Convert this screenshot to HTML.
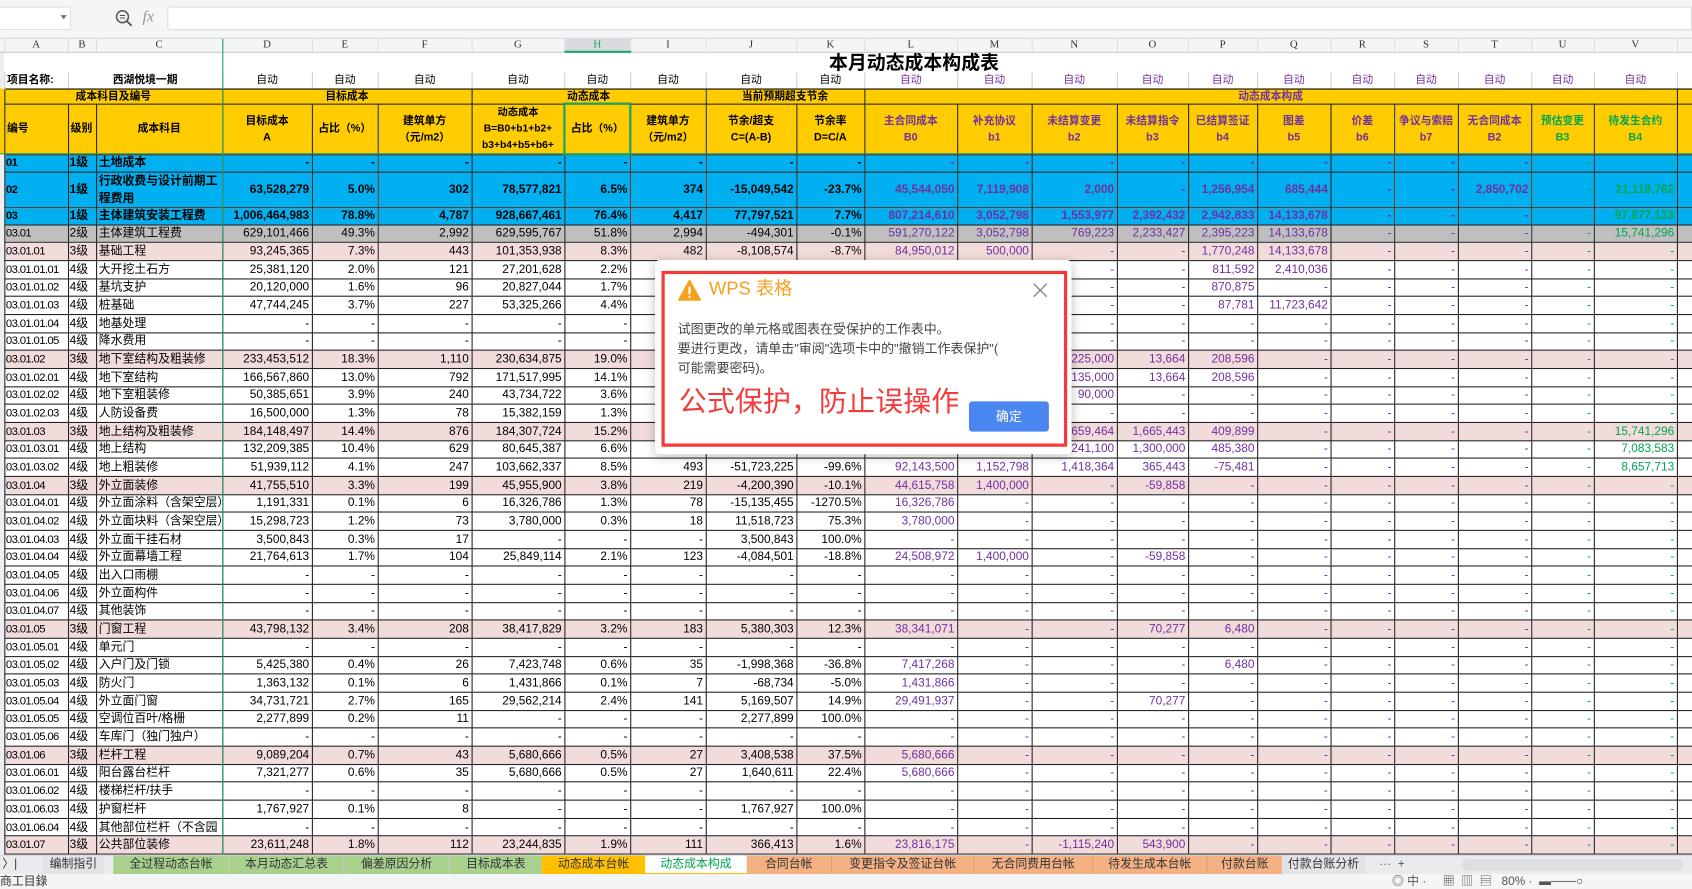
<!DOCTYPE html>
<html><head><meta charset="utf-8">
<style>
*{margin:0;padding:0;box-sizing:border-box}
html,body{width:1692px;height:889px;overflow:hidden;background:#fff}
#w{position:absolute;left:0;top:0;width:1568px;height:824px;transform:scale(1.07908);transform-origin:0 0;font-family:"Liberation Sans Narrow","Liberation Sans","Noto Sans CJK SC",sans-serif;font-size:11px;color:#000}
#tb{position:absolute;left:0;top:0;width:1568px;height:36px;background:#f4f5f7;border-bottom:1px solid #d5d7db}
#nb{position:absolute;left:0;top:6px;width:66px;height:22px;background:#fff;border:1px solid #d9dbe0;border-left:none;border-radius:0 3px 3px 0}
#fb{position:absolute;left:155px;top:6px;width:1413px;height:22px;background:#fff;border:1px solid #d9dbe0;border-radius:3px 0 0 3px}
table{position:absolute;left:0;top:36px;border-collapse:collapse;table-layout:fixed;width:1568px}
td{border:1px solid #222;text-align:right;padding:0 2px;white-space:nowrap;overflow:hidden;line-height:14px}
td:nth-child(2),td:nth-child(3),td:nth-child(4){text-align:left}
tr.d td:nth-child(2){letter-spacing:-0.6px;font-size:10.5px;padding:0 1px}
tr.d td:nth-child(3){padding:0 1px}
td:nth-child(1){border:none;background:#eceef1;padding:0}
tr.d td:nth-child(n+13):nth-child(-n+21){color:#7030a0}
tr.d td:nth-child(22),tr.d td:nth-child(23){color:#00a650}
tr.d td:nth-child(24){border-right:none}
tr.d{height:16.686px}
tr.c1 td{background:#00b0f0;font-weight:bold}
tr.c2 td{background:#bfbfbf}
tr.c3 td{background:#f2dcdb}
tr.c1 td:nth-child(1),tr.c2 td:nth-child(1),tr.c3 td:nth-child(1){background:#eceef1}
tr.ch td{background:#f4f5f7;border:none;border-right:1px solid #dcdde0;border-bottom:1px solid #c8cad0;text-align:center;font-family:"Liberation Serif",serif;font-size:10px;color:#333;line-height:11px}
tr.ch td.sel{background:#d8dbe0;border-bottom:2px solid #21a366;color:#21a366}
tr.tt td{border:none}
tr.r2 td{border:none;border-right:1px solid #d0d0d0;border-bottom:1px solid #000;text-align:center;font-size:10px;line-height:13px}
tr.h3 td,tr.h4 td{background:#ffcc00;font-weight:bold;text-align:center;font-size:10px;line-height:13px}
tr.h4 td{white-space:normal;line-height:15px}
.p{color:#7030a0}.g{color:#00a650}
.wrap{white-space:normal!important;line-height:16px!important}
#gv{position:absolute;left:206px;top:36px;width:1px;height:756px;background:#21a366}
#gh{position:absolute;left:0;top:142px;width:1568px;height:1px;background:#21a366}
#selc{position:absolute;left:522px;top:95px;width:63px;height:49px;border:2px solid #21a366}
#tabs{position:absolute;left:0;top:792px;width:1568px;height:18px;background:#e9ebee;border-top:1px solid #d0d2d6;font-family:"Liberation Sans","Noto Sans CJK SC",sans-serif;font-size:11px}
.tab{position:absolute;top:0;height:18px;line-height:17px;text-align:center;color:#333}
#st{position:absolute;left:0;top:810px;width:1568px;height:14px;background:#f4f5f7;font-family:"Liberation Sans","Noto Sans CJK SC",sans-serif;font-size:11px;color:#333}
#dlg{position:absolute;left:607px;top:241px;width:386px;height:180px;background:#fff;border-radius:4px;box-shadow:0 2px 10px rgba(0,0,0,.25);font-family:"Liberation Sans","Noto Sans CJK SC",sans-serif}
#red{position:absolute;left:6px;top:10px;width:376px;height:163px;border:3px solid #f53a3a}
</style></head><body><div id="w">
<div id="tb"><div id="nb"><span style="position:absolute;left:56px;top:7px;width:0;height:0;border-left:3px solid transparent;border-right:3px solid transparent;border-top:4px solid #777"></span></div>
<svg style="position:absolute;left:106px;top:8px" width="18" height="18" viewBox="0 0 18 18"><circle cx="7.5" cy="7.5" r="5.5" fill="none" stroke="#555" stroke-width="1.4"/><line x1="11.5" y1="11.5" x2="16" y2="16" stroke="#555" stroke-width="1.6"/><line x1="5" y1="6.3" x2="10" y2="6.3" stroke="#555"/><line x1="5" y1="8.7" x2="10" y2="8.7" stroke="#555"/></svg>
<span style="position:absolute;left:132px;top:8px;font-family:'Liberation Serif',serif;font-style:italic;font-size:15px;color:#999">fx</span>
<div id="fb"></div></div>
<table>
<colgroup><col style="width:4px"><col style="width:59px"><col style="width:26px"><col style="width:117px"><col style="width:83px"><col style="width:61px"><col style="width:87px"><col style="width:86px"><col style="width:61px"><col style="width:70px"><col style="width:84px"><col style="width:63px"><col style="width:86px"><col style="width:69px"><col style="width:79px"><col style="width:66px"><col style="width:64px"><col style="width:68px"><col style="width:59px"><col style="width:59px"><col style="width:68px"><col style="width:58px"><col style="width:77px"><col style="width:14px"></colgroup>
<tr class="ch" style="height:12px"><td></td><td>A</td><td>B</td><td>C</td><td>D</td><td>E</td><td>F</td><td>G</td><td class="sel">H</td><td>I</td><td>J</td><td>K</td><td>L</td><td>M</td><td>N</td><td>O</td><td>P</td><td>Q</td><td>R</td><td>S</td><td>T</td><td>U</td><td>V</td><td></td></tr>
<tr class="tt" style="height:19px"><td></td><td colspan="23"></td></tr>
<tr class="r2" style="height:15px"><td style="border-bottom:none"></td><td style="text-align:left;font-weight:bold">项目名称:</td><td colspan="2" style="font-weight:bold">西湖悦境一期</td><td>自动</td><td>自动</td><td>自动</td><td>自动</td><td>自动</td><td>自动</td><td>自动</td><td>自动</td><td class="p">自动</td><td class="p">自动</td><td class="p">自动</td><td class="p">自动</td><td class="p">自动</td><td class="p">自动</td><td class="p">自动</td><td class="p">自动</td><td class="p">自动</td><td class="p">自动</td><td class="p">自动</td><td></td></tr>
<tr class="h3" style="height:14px"><td></td><td colspan="3">成本科目及编号</td><td colspan="3">目标成本</td><td colspan="3">动态成本</td><td colspan="2">当前预期超支节余</td><td colspan="11" class="p">动态成本构成</td><td></td></tr>
<tr class="h4" style="height:47px"><td></td><td style="text-align:left">编号</td><td style="text-align:left">级别</td><td style="text-align:center">成本科目</td><td>目标成本<br>A</td><td>占比（%）</td><td>建筑单方<br>（元/m2）</td><td style="font-size:9.5px;line-height:15px">动态成本<br>B=B0+b1+b2+<br>b3+b4+b5+b6+</td><td>占比（%）</td><td>建筑单方<br>（元/m2）</td><td>节余/超支<br>C=(A-B)</td><td>节余率<br>D=C/A</td><td class="p">主合同成本<br>B0</td><td class="p">补充协议<br>b1</td><td class="p">未结算变更<br>b2</td><td class="p">未结算指令<br>b3</td><td class="p">已结算签证<br>b4</td><td class="p">图差<br>b5</td><td class="p">价差<br>b6</td><td class="p">争议与索赔<br>b7</td><td class="p">无合同成本<br>B2</td><td class="g">预估变更<br>B3</td><td class="g">待发生合约<br>B4</td><td></td></tr>
<tr class="d c1" style="height:16px"><td></td><td>01</td><td>1级</td><td>土地成本</td><td>-</td><td>-</td><td>-</td><td>-</td><td>-</td><td>-</td><td>-</td><td>-</td><td>-</td><td>-</td><td>-</td><td>-</td><td>-</td><td>-</td><td>-</td><td>-</td><td>-</td><td>-</td><td>-</td><td></td></tr>
<tr class="d c1" style="height:33px"><td></td><td>02</td><td>1级</td><td class="wrap">行政收费与设计前期工程费用</td><td>63,528,279</td><td>5.0%</td><td>302</td><td>78,577,821</td><td>6.5%</td><td>374</td><td>-15,049,542</td><td>-23.7%</td><td>45,544,050</td><td>7,119,908</td><td>2,000</td><td>-</td><td>1,256,954</td><td>685,444</td><td>-</td><td>-</td><td>2,850,702</td><td>-</td><td>21,118,762</td><td></td></tr>
<tr class="d c1" style="height:16px"><td></td><td>03</td><td>1级</td><td>主体建筑安装工程费</td><td>1,006,464,983</td><td>78.8%</td><td>4,787</td><td>928,667,461</td><td>76.4%</td><td>4,417</td><td>77,797,521</td><td>7.7%</td><td>807,214,610</td><td>3,052,798</td><td>1,553,977</td><td>2,392,432</td><td>2,942,833</td><td>14,133,678</td><td>-</td><td>-</td><td>-</td><td>-</td><td>97,877,133</td><td></td></tr>
<tr class="d c2"><td></td><td>03.01</td><td>2级</td><td>主体建筑工程费</td><td>629,101,466</td><td>49.3%</td><td>2,992</td><td>629,595,767</td><td>51.8%</td><td>2,994</td><td>-494,301</td><td>-0.1%</td><td>591,270,122</td><td>3,052,798</td><td>769,223</td><td>2,233,427</td><td>2,395,223</td><td>14,133,678</td><td>-</td><td>-</td><td>-</td><td>-</td><td>15,741,296</td><td></td></tr>
<tr class="d c3"><td></td><td>03.01.01</td><td>3级</td><td>基础工程</td><td>93,245,365</td><td>7.3%</td><td>443</td><td>101,353,938</td><td>8.3%</td><td>482</td><td>-8,108,574</td><td>-8.7%</td><td>84,950,012</td><td>500,000</td><td>-</td><td>-</td><td>1,770,248</td><td>14,133,678</td><td>-</td><td>-</td><td>-</td><td>-</td><td>-</td><td></td></tr>
<tr class="d"><td></td><td>03.01.01.01</td><td>4级</td><td>大开挖土石方</td><td>25,381,120</td><td>2.0%</td><td>121</td><td>27,201,628</td><td>2.2%</td><td>129</td><td>-</td><td>-</td><td>-</td><td>-</td><td>-</td><td>-</td><td>811,592</td><td>2,410,036</td><td>-</td><td>-</td><td>-</td><td>-</td><td>-</td><td></td></tr>
<tr class="d"><td></td><td>03.01.01.02</td><td>4级</td><td>基坑支护</td><td>20,120,000</td><td>1.6%</td><td>96</td><td>20,827,044</td><td>1.7%</td><td>99</td><td>-</td><td>-</td><td>-</td><td>-</td><td>-</td><td>-</td><td>870,875</td><td>-</td><td>-</td><td>-</td><td>-</td><td>-</td><td>-</td><td></td></tr>
<tr class="d"><td></td><td>03.01.01.03</td><td>4级</td><td>桩基础</td><td>47,744,245</td><td>3.7%</td><td>227</td><td>53,325,266</td><td>4.4%</td><td>254</td><td>-</td><td>-</td><td>-</td><td>-</td><td>-</td><td>-</td><td>87,781</td><td>11,723,642</td><td>-</td><td>-</td><td>-</td><td>-</td><td>-</td><td></td></tr>
<tr class="d"><td></td><td>03.01.01.04</td><td>4级</td><td>地基处理</td><td>-</td><td>-</td><td>-</td><td>-</td><td>-</td><td>-</td><td>-</td><td>-</td><td>-</td><td>-</td><td>-</td><td>-</td><td>-</td><td>-</td><td>-</td><td>-</td><td>-</td><td>-</td><td>-</td><td></td></tr>
<tr class="d"><td></td><td>03.01.01.05</td><td>4级</td><td>降水费用</td><td>-</td><td>-</td><td>-</td><td>-</td><td>-</td><td>-</td><td>-</td><td>-</td><td>-</td><td>-</td><td>-</td><td>-</td><td>-</td><td>-</td><td>-</td><td>-</td><td>-</td><td>-</td><td>-</td><td></td></tr>
<tr class="d c3"><td></td><td>03.01.02</td><td>3级</td><td>地下室结构及粗装修</td><td>233,453,512</td><td>18.3%</td><td>1,110</td><td>230,634,875</td><td>19.0%</td><td>1,097</td><td>-</td><td>-</td><td>-</td><td>-</td><td>225,000</td><td>13,664</td><td>208,596</td><td>-</td><td>-</td><td>-</td><td>-</td><td>-</td><td>-</td><td></td></tr>
<tr class="d"><td></td><td>03.01.02.01</td><td>4级</td><td>地下室结构</td><td>166,567,860</td><td>13.0%</td><td>792</td><td>171,517,995</td><td>14.1%</td><td>816</td><td>-</td><td>-</td><td>-</td><td>-</td><td>135,000</td><td>13,664</td><td>208,596</td><td>-</td><td>-</td><td>-</td><td>-</td><td>-</td><td>-</td><td></td></tr>
<tr class="d"><td></td><td>03.01.02.02</td><td>4级</td><td>地下室粗装修</td><td>50,385,651</td><td>3.9%</td><td>240</td><td>43,734,722</td><td>3.6%</td><td>208</td><td>-</td><td>-</td><td>-</td><td>-</td><td>90,000</td><td>-</td><td>-</td><td>-</td><td>-</td><td>-</td><td>-</td><td>-</td><td>-</td><td></td></tr>
<tr class="d"><td></td><td>03.01.02.03</td><td>4级</td><td>人防设备费</td><td>16,500,000</td><td>1.3%</td><td>78</td><td>15,382,159</td><td>1.3%</td><td>73</td><td>-</td><td>-</td><td>-</td><td>-</td><td>-</td><td>-</td><td>-</td><td>-</td><td>-</td><td>-</td><td>-</td><td>-</td><td>-</td><td></td></tr>
<tr class="d c3"><td></td><td>03.01.03</td><td>3级</td><td>地上结构及粗装修</td><td>184,148,497</td><td>14.4%</td><td>876</td><td>184,307,724</td><td>15.2%</td><td>877</td><td>-</td><td>-</td><td>-</td><td>-</td><td>1,659,464</td><td>1,665,443</td><td>409,899</td><td>-</td><td>-</td><td>-</td><td>-</td><td>-</td><td>15,741,296</td><td></td></tr>
<tr class="d"><td></td><td>03.01.03.01</td><td>4级</td><td>地上结构</td><td>132,209,385</td><td>10.4%</td><td>629</td><td>80,645,387</td><td>6.6%</td><td>384</td><td>-</td><td>-</td><td>-</td><td>-</td><td>241,100</td><td>1,300,000</td><td>485,380</td><td>-</td><td>-</td><td>-</td><td>-</td><td>-</td><td>7,083,583</td><td></td></tr>
<tr class="d"><td></td><td>03.01.03.02</td><td>4级</td><td>地上粗装修</td><td>51,939,112</td><td>4.1%</td><td>247</td><td>103,662,337</td><td>8.5%</td><td>493</td><td>-51,723,225</td><td>-99.6%</td><td>92,143,500</td><td>1,152,798</td><td>1,418,364</td><td>365,443</td><td>-75,481</td><td>-</td><td>-</td><td>-</td><td>-</td><td>-</td><td>8,657,713</td><td></td></tr>
<tr class="d c3"><td></td><td>03.01.04</td><td>3级</td><td>外立面装修</td><td>41,755,510</td><td>3.3%</td><td>199</td><td>45,955,900</td><td>3.8%</td><td>219</td><td>-4,200,390</td><td>-10.1%</td><td>44,615,758</td><td>1,400,000</td><td>-</td><td>-59,858</td><td>-</td><td>-</td><td>-</td><td>-</td><td>-</td><td>-</td><td>-</td><td></td></tr>
<tr class="d"><td></td><td>03.01.04.01</td><td>4级</td><td>外立面涂料（含架空层）</td><td>1,191,331</td><td>0.1%</td><td>6</td><td>16,326,786</td><td>1.3%</td><td>78</td><td>-15,135,455</td><td>-1270.5%</td><td>16,326,786</td><td>-</td><td>-</td><td>-</td><td>-</td><td>-</td><td>-</td><td>-</td><td>-</td><td>-</td><td>-</td><td></td></tr>
<tr class="d"><td></td><td>03.01.04.02</td><td>4级</td><td>外立面块料（含架空层）</td><td>15,298,723</td><td>1.2%</td><td>73</td><td>3,780,000</td><td>0.3%</td><td>18</td><td>11,518,723</td><td>75.3%</td><td>3,780,000</td><td>-</td><td>-</td><td>-</td><td>-</td><td>-</td><td>-</td><td>-</td><td>-</td><td>-</td><td>-</td><td></td></tr>
<tr class="d"><td></td><td>03.01.04.03</td><td>4级</td><td>外立面干挂石材</td><td>3,500,843</td><td>0.3%</td><td>17</td><td>-</td><td>-</td><td>-</td><td>3,500,843</td><td>100.0%</td><td>-</td><td>-</td><td>-</td><td>-</td><td>-</td><td>-</td><td>-</td><td>-</td><td>-</td><td>-</td><td>-</td><td></td></tr>
<tr class="d"><td></td><td>03.01.04.04</td><td>4级</td><td>外立面幕墙工程</td><td>21,764,613</td><td>1.7%</td><td>104</td><td>25,849,114</td><td>2.1%</td><td>123</td><td>-4,084,501</td><td>-18.8%</td><td>24,508,972</td><td>1,400,000</td><td>-</td><td>-59,858</td><td>-</td><td>-</td><td>-</td><td>-</td><td>-</td><td>-</td><td>-</td><td></td></tr>
<tr class="d"><td></td><td>03.01.04.05</td><td>4级</td><td>出入口雨棚</td><td>-</td><td>-</td><td>-</td><td>-</td><td>-</td><td>-</td><td>-</td><td>-</td><td>-</td><td>-</td><td>-</td><td>-</td><td>-</td><td>-</td><td>-</td><td>-</td><td>-</td><td>-</td><td>-</td><td></td></tr>
<tr class="d"><td></td><td>03.01.04.06</td><td>4级</td><td>外立面构件</td><td>-</td><td>-</td><td>-</td><td>-</td><td>-</td><td>-</td><td>-</td><td>-</td><td>-</td><td>-</td><td>-</td><td>-</td><td>-</td><td>-</td><td>-</td><td>-</td><td>-</td><td>-</td><td>-</td><td></td></tr>
<tr class="d"><td></td><td>03.01.04.07</td><td>4级</td><td>其他装饰</td><td>-</td><td>-</td><td>-</td><td>-</td><td>-</td><td>-</td><td>-</td><td>-</td><td>-</td><td>-</td><td>-</td><td>-</td><td>-</td><td>-</td><td>-</td><td>-</td><td>-</td><td>-</td><td>-</td><td></td></tr>
<tr class="d c3"><td></td><td>03.01.05</td><td>3级</td><td>门窗工程</td><td>43,798,132</td><td>3.4%</td><td>208</td><td>38,417,829</td><td>3.2%</td><td>183</td><td>5,380,303</td><td>12.3%</td><td>38,341,071</td><td>-</td><td>-</td><td>70,277</td><td>6,480</td><td>-</td><td>-</td><td>-</td><td>-</td><td>-</td><td>-</td><td></td></tr>
<tr class="d"><td></td><td>03.01.05.01</td><td>4级</td><td>单元门</td><td>-</td><td>-</td><td>-</td><td>-</td><td>-</td><td>-</td><td>-</td><td>-</td><td>-</td><td>-</td><td>-</td><td>-</td><td>-</td><td>-</td><td>-</td><td>-</td><td>-</td><td>-</td><td>-</td><td></td></tr>
<tr class="d"><td></td><td>03.01.05.02</td><td>4级</td><td>入户门及门锁</td><td>5,425,380</td><td>0.4%</td><td>26</td><td>7,423,748</td><td>0.6%</td><td>35</td><td>-1,998,368</td><td>-36.8%</td><td>7,417,268</td><td>-</td><td>-</td><td>-</td><td>6,480</td><td>-</td><td>-</td><td>-</td><td>-</td><td>-</td><td>-</td><td></td></tr>
<tr class="d"><td></td><td>03.01.05.03</td><td>4级</td><td>防火门</td><td>1,363,132</td><td>0.1%</td><td>6</td><td>1,431,866</td><td>0.1%</td><td>7</td><td>-68,734</td><td>-5.0%</td><td>1,431,866</td><td>-</td><td>-</td><td>-</td><td>-</td><td>-</td><td>-</td><td>-</td><td>-</td><td>-</td><td>-</td><td></td></tr>
<tr class="d"><td></td><td>03.01.05.04</td><td>4级</td><td>外立面门窗</td><td>34,731,721</td><td>2.7%</td><td>165</td><td>29,562,214</td><td>2.4%</td><td>141</td><td>5,169,507</td><td>14.9%</td><td>29,491,937</td><td>-</td><td>-</td><td>70,277</td><td>-</td><td>-</td><td>-</td><td>-</td><td>-</td><td>-</td><td>-</td><td></td></tr>
<tr class="d"><td></td><td>03.01.05.05</td><td>4级</td><td>空调位百叶/格栅</td><td>2,277,899</td><td>0.2%</td><td>11</td><td>-</td><td>-</td><td>-</td><td>2,277,899</td><td>100.0%</td><td>-</td><td>-</td><td>-</td><td>-</td><td>-</td><td>-</td><td>-</td><td>-</td><td>-</td><td>-</td><td>-</td><td></td></tr>
<tr class="d"><td></td><td>03.01.05.06</td><td>4级</td><td>车库门（独门独户）</td><td>-</td><td>-</td><td>-</td><td>-</td><td>-</td><td>-</td><td>-</td><td>-</td><td>-</td><td>-</td><td>-</td><td>-</td><td>-</td><td>-</td><td>-</td><td>-</td><td>-</td><td>-</td><td>-</td><td></td></tr>
<tr class="d c3"><td></td><td>03.01.06</td><td>3级</td><td>栏杆工程</td><td>9,089,204</td><td>0.7%</td><td>43</td><td>5,680,666</td><td>0.5%</td><td>27</td><td>3,408,538</td><td>37.5%</td><td>5,680,666</td><td>-</td><td>-</td><td>-</td><td>-</td><td>-</td><td>-</td><td>-</td><td>-</td><td>-</td><td>-</td><td></td></tr>
<tr class="d"><td></td><td>03.01.06.01</td><td>4级</td><td>阳台露台栏杆</td><td>7,321,277</td><td>0.6%</td><td>35</td><td>5,680,666</td><td>0.5%</td><td>27</td><td>1,640,611</td><td>22.4%</td><td>5,680,666</td><td>-</td><td>-</td><td>-</td><td>-</td><td>-</td><td>-</td><td>-</td><td>-</td><td>-</td><td>-</td><td></td></tr>
<tr class="d"><td></td><td>03.01.06.02</td><td>4级</td><td>楼梯栏杆/扶手</td><td>-</td><td>-</td><td>-</td><td>-</td><td>-</td><td>-</td><td>-</td><td>-</td><td>-</td><td>-</td><td>-</td><td>-</td><td>-</td><td>-</td><td>-</td><td>-</td><td>-</td><td>-</td><td>-</td><td></td></tr>
<tr class="d"><td></td><td>03.01.06.03</td><td>4级</td><td>护窗栏杆</td><td>1,767,927</td><td>0.1%</td><td>8</td><td>-</td><td>-</td><td>-</td><td>1,767,927</td><td>100.0%</td><td>-</td><td>-</td><td>-</td><td>-</td><td>-</td><td>-</td><td>-</td><td>-</td><td>-</td><td>-</td><td>-</td><td></td></tr>
<tr class="d"><td></td><td>03.01.06.04</td><td>4级</td><td>其他部位栏杆（不含园</td><td>-</td><td>-</td><td>-</td><td>-</td><td>-</td><td>-</td><td>-</td><td>-</td><td>-</td><td>-</td><td>-</td><td>-</td><td>-</td><td>-</td><td>-</td><td>-</td><td>-</td><td>-</td><td>-</td><td></td></tr>
<tr class="d c3"><td></td><td>03.01.07</td><td>3级</td><td>公共部位装修</td><td>23,611,248</td><td>1.8%</td><td>112</td><td>23,244,835</td><td>1.9%</td><td>111</td><td>366,413</td><td>1.6%</td><td>23,816,175</td><td>-</td><td>-1,115,240</td><td>543,900</td><td>-</td><td>-</td><td>-</td><td>-</td><td>-</td><td>-</td><td>-</td><td></td></tr>
</table>
<div style="position:absolute;left:700px;top:47px;width:294px;text-align:center;font-family:'Liberation Sans','Noto Sans CJK SC',sans-serif;font-weight:bold;font-size:17.5px;line-height:22px">本月动态成本构成表</div>
<div id="gv"></div><div id="gh"></div><div id="selc"></div>
<div id="tabs">
<div class="tab" style="left:2px;width:14px">〉|</div>
<div class="tab" style="left:40px;width:56px;background:#e1e3e7">编制指引</div>
<div class="tab" style="left:105px;width:107px;background:#a9d18e">全过程动态台帐</div>
<div class="tab" style="left:212px;width:106px;background:#a9d18e;border-left:1px solid #c6c6c6">本月动态汇总表</div>
<div class="tab" style="left:318px;width:98px;background:#a9d18e;border-left:1px solid #c6c6c6">偏差原因分析</div>
<div class="tab" style="left:416px;width:86px;background:#a9d18e;border-left:1px solid #c6c6c6">目标成本表</div>
<div class="tab" style="left:502px;width:96px;background:#ffc000">动态成本台帐</div>
<div class="tab" style="left:598px;width:94px;background:#fff;color:#00a650;border-bottom:2px solid #ffc000">动态成本构成</div>
<div class="tab" style="left:692px;width:78px;background:#f4b183">合同台帐</div>
<div class="tab" style="left:770px;width:132px;background:#f4b183;border-left:1px solid #d9a07a">变更指令及签证台帐</div>
<div class="tab" style="left:902px;width:110px;background:#f4b183;border-left:1px solid #d9a07a">无合同费用台帐</div>
<div class="tab" style="left:1012px;width:106px;background:#f4b183;border-left:1px solid #d9a07a">待发生成本台帐</div>
<div class="tab" style="left:1118px;width:70px;background:#f4b183;border-left:1px solid #d9a07a">付款台账</div>
<div class="tab" style="left:1188px;width:77px;background:#e1e3e7">付款台账分析</div>
<div class="tab" style="left:1270px;width:40px;color:#555">···&nbsp;&nbsp;+</div>
<div style="position:absolute;left:1355px;top:3px;width:205px;height:11px;background:#dcdee2;border-radius:5px"></div>
</div>
<div id="st"><span style="position:absolute;left:0;top:0;line-height:14px">商工目錄</span><span style="position:absolute;left:1290px;top:0;line-height:14px;color:#555">◎ 中 ·&nbsp;&nbsp;&nbsp;&nbsp;&nbsp;▦&nbsp;&nbsp;▥&nbsp;&nbsp;▤&nbsp;&nbsp;&nbsp;80% ·&nbsp;&nbsp;▬───○</span></div>
<div id="dlg"><div id="red"></div>
<svg style="position:absolute;left:21px;top:18px" width="22" height="20" viewBox="0 0 22 20"><path d="M11 1 L21 19 L1 19 Z" fill="#f7a01c" stroke="#f7a01c" stroke-linejoin="round" stroke-width="1.5"/><rect x="10" y="6.5" width="2" height="7" fill="#fff"/><rect x="10" y="15" width="2" height="2" fill="#fff"/></svg>
<div style="position:absolute;left:50px;top:16px;font-size:17px;color:#f5a020;line-height:22px">WPS 表格</div>
<svg style="position:absolute;left:350px;top:21px" width="14" height="14" viewBox="0 0 14 14"><path d="M1 1 L13 13 M13 1 L1 13" stroke="#888" stroke-width="1.3"/></svg>
<div style="position:absolute;left:21px;top:55px;font-size:12px;color:#444;line-height:18px">试图更改的单元格或图表在受保护的工作表中。<br>要进行更改，请单击"审阅"选项卡中的"撤销工作表保护"(<br>可能需要密码)。</div>
<div style="position:absolute;left:22px;top:114px;font-size:26px;color:#f53a3a;line-height:34px">公式保护，防止误操作</div>
<div style="position:absolute;left:291px;top:131px;width:74px;height:28px;background:#4a86f0;border-radius:3px;color:#fff;font-size:12px;text-align:center;line-height:28px">确定</div>
</div>
</div></body></html>
